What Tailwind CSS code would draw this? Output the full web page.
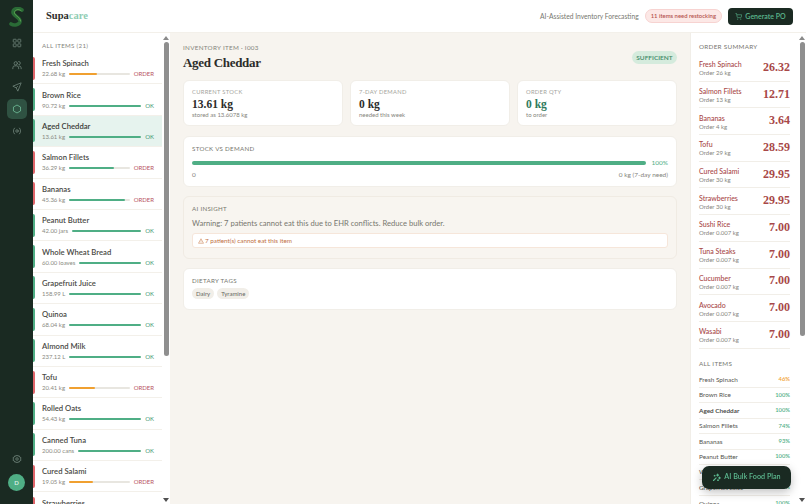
<!doctype html>
<html lang="en">

<head>
  <meta charset="UTF-8" />
  <meta name="viewport" content="width=device-width, initial-scale=1.0" />
  <title>Supacare</title>
  <script src="https://cdn.jsdelivr.net/npm/@tailwindcss/browser@4"></script>
</head>

<body class="overflow-hidden">
  <div class="flex h-[504px] w-[806px] overflow-hidden bg-white font-['Lato',sans-serif] text-[#2c2c2a]">

    <!-- icon rail -->
    <nav class="flex w-[33px] shrink-0 flex-col items-center bg-[#1a2a22] text-[#6d8278]">
      <svg class="mt-[7px] h-[20px] w-[15px]" viewBox="0 0 15 20" fill="none" stroke-linecap="round">
        <path d="M13 3C10 0.500 4.500 1 4 5c-.5 4 7.500 5 7 9.500C10.500 18 5 19 2 17" stroke="#2a6b36" stroke-width="3.600" />
        <path d="M12 3.500C9.500 2 6 2.500 5.500 5.500 5 8.500 11.500 10 11.500 14" stroke="#5ea552" stroke-width="1" />
      </svg>
      <svg class="mt-[11px] h-[10px] w-[10px]" viewBox="0 0 24 24" fill="none" stroke="currentColor" stroke-width="2">
        <rect x="3" y="3" width="7" height="7" rx="1" /><rect x="14" y="3" width="7" height="7" rx="1" />
        <rect x="3" y="14" width="7" height="7" rx="1" /><rect x="14" y="14" width="7" height="7" rx="1" />
      </svg>
      <svg class="mt-[12px] h-[10px] w-[10px]" viewBox="0 0 24 24" fill="none" stroke="currentColor" stroke-width="2" stroke-linecap="round">
        <circle cx="9" cy="8" r="4" /><path d="M2 21v-2a5 5 0 0 1 5-5h4a5 5 0 0 1 5 5v2" /><path d="M16 3.500a4 4 0 0 1 0 8M22 21v-2a5 5 0 0 0-4-4.800" />
      </svg>
      <svg class="mt-[12px] h-[10px] w-[10px]" viewBox="0 0 24 24" fill="none" stroke="currentColor" stroke-width="2" stroke-linejoin="round">
        <path d="M22 2 2 10l8 4 4 8 8-20ZM10 14l4-4" />
      </svg>
      <div class="mt-[7px] flex h-[20px] w-[20px] items-center justify-center rounded-[5px] bg-[#2f5242] text-[#6dbb96]">
        <svg class="h-[10px] w-[10px]" viewBox="0 0 24 24" fill="none" stroke="currentColor" stroke-width="2"><path d="M12 2.500 20.500 7.200v9.600L12 21.500l-8.500-4.700V7.200Z" /></svg>
      </div>
      <svg class="mt-[7px] h-[10px] w-[10px]" viewBox="0 0 24 24" fill="none" stroke="currentColor" stroke-width="2" stroke-linecap="round">
        <circle cx="12" cy="12" r="3" /><path d="M6 5a10 10 0 0 0 0 14M18 5a10 10 0 0 1 0 14" />
      </svg>
      <svg class="mt-auto h-[10px] w-[10px]" viewBox="0 0 24 24" fill="none" stroke="currentColor" stroke-width="2">
        <circle cx="12" cy="12" r="3" /><path d="M12 2.500 14 5l3.200-.6 1.100 3 3 1.100L20.700 12l.6 3.500-3 1.100-1.100 3-3.200-.6-2 2.500-2-2.500-3.200.6-1.100-3-3-1.100.6-3.500-.6-3.500 3-1.100 1.100-3L10 5Z" />
      </svg>
      <div class="mt-[10px] mb-[13px] flex h-[17px] w-[17px] items-center justify-center rounded-full bg-[#4fae85] text-[6px] font-semibold text-[#dff1e8]">D</div>
    </nav>

    <div class="flex min-w-0 flex-1 flex-col">
      <!-- top bar -->
      <header class="flex h-[33px] shrink-0 items-center border-b border-[#f3f0ea] px-[13px]">
        <div class="font-['Liberation_Serif',serif] text-[10.500px] font-bold">Supa<span class="text-[#8fcdb3]">care</span></div>
        <span class="ml-auto text-[6.700px] text-[#77776f]">AI-Assisted Inventory Forecasting</span>
        <span class="ml-[6px] rounded-full border border-[#f7d3d1] bg-[#fce8e6] px-[5px] py-[2px] text-[5.900px] leading-[8px] font-semibold text-[#b5534f]">11 items need restocking</span>
        <button class="ml-[6px] flex h-[17px] w-[65px] items-center justify-center gap-[3px] rounded-[4px] bg-[#1a2a22] text-[7px] font-semibold text-[#5cb98f]">
          <svg class="h-[7px] w-[7px]" viewBox="0 0 24 24" fill="none" stroke="currentColor" stroke-width="2"><circle cx="9" cy="21" r="1" /><circle cx="20" cy="21" r="1" /><path d="M1 1h4l2.700 13.400a2 2 0 0 0 2 1.600h9.700a2 2 0 0 0 2-1.600L23 6H6" /></svg>
          Generate PO
        </button>
      </header>

      <div class="flex min-h-0 flex-1">
        <!-- items list -->
        <aside class="flex w-[137px] shrink-0 overflow-hidden bg-white">
          <div class="w-[129px] shrink-0">
            <div class="flex h-[20px] items-end pb-[3px] pl-[9px] text-[6.200px] tracking-[0.3px] text-[#85857d]">ALL ITEMS (21)</div>

            <div class="flex h-[31.400px] items-center border-b border-[#f3f0ea]">
              <div class="h-[23px] w-[2px] rounded-r bg-[#e0656a]"></div>
              <div class="flex-1 pr-[8px] pl-[7px]">
                <div class="text-[7.700px] leading-[10px] font-semibold text-[#4a4a45]">Fresh Spinach</div>
                <div class="mt-[2px] flex items-center gap-[4px] text-[6px] leading-[8px] text-[#8a8a82]"><span>22.68 kg</span><div class="h-[2px] flex-1 rounded bg-[#e8e6e0]"><div class="h-full w-[46%] rounded bg-[#f0a030]"></div></div><span class="text-[#b8555f]">ORDER</span></div>
              </div>
            </div>
            <div class="flex h-[31.400px] items-center border-b border-[#f3f0ea]">
              <div class="h-[23px] w-[2px] rounded-r bg-[#4fae85]"></div>
              <div class="flex-1 pr-[8px] pl-[7px]">
                <div class="text-[7.700px] leading-[10px] font-semibold text-[#4a4a45]">Brown Rice</div>
                <div class="mt-[2px] flex items-center gap-[4px] text-[6px] leading-[8px] text-[#8a8a82]"><span>90.72 kg</span><div class="h-[2px] flex-1 rounded bg-[#4fae85]"></div><span class="text-[#3f9a75]">OK</span></div>
              </div>
            </div>
            <div class="flex h-[31.400px] items-center border-b border-[#f3f0ea] bg-[#e6f3ee]">
              <div class="h-[23px] w-[2px] rounded-r bg-[#4fae85]"></div>
              <div class="flex-1 pr-[8px] pl-[7px]">
                <div class="text-[7.700px] leading-[10px] font-semibold text-[#3c3c38]">Aged Cheddar</div>
                <div class="mt-[2px] flex items-center gap-[4px] text-[6px] leading-[8px] text-[#8a8a82]"><span>13.61 kg</span><div class="h-[2px] flex-1 rounded bg-[#4fae85]"></div><span class="text-[#3f9a75]">OK</span></div>
              </div>
            </div>
            <div class="flex h-[31.400px] items-center border-b border-[#f3f0ea]">
              <div class="h-[23px] w-[2px] rounded-r bg-[#e0656a]"></div>
              <div class="flex-1 pr-[8px] pl-[7px]">
                <div class="text-[7.700px] leading-[10px] font-semibold text-[#4a4a45]">Salmon Fillets</div>
                <div class="mt-[2px] flex items-center gap-[4px] text-[6px] leading-[8px] text-[#8a8a82]"><span>36.29 kg</span><div class="h-[2px] flex-1 rounded bg-[#e8e6e0]"><div class="h-full w-[74%] rounded bg-[#4fae85]"></div></div><span class="text-[#b8555f]">ORDER</span></div>
              </div>
            </div>
            <div class="flex h-[31.400px] items-center border-b border-[#f3f0ea]">
              <div class="h-[23px] w-[2px] rounded-r bg-[#e0656a]"></div>
              <div class="flex-1 pr-[8px] pl-[7px]">
                <div class="text-[7.700px] leading-[10px] font-semibold text-[#4a4a45]">Bananas</div>
                <div class="mt-[2px] flex items-center gap-[4px] text-[6px] leading-[8px] text-[#8a8a82]"><span>45.36 kg</span><div class="h-[2px] flex-1 rounded bg-[#e8e6e0]"><div class="h-full w-[93%] rounded bg-[#4fae85]"></div></div><span class="text-[#b8555f]">ORDER</span></div>
              </div>
            </div>
            <div class="flex h-[31.400px] items-center border-b border-[#f3f0ea]">
              <div class="h-[23px] w-[2px] rounded-r bg-[#4fae85]"></div>
              <div class="flex-1 pr-[8px] pl-[7px]">
                <div class="text-[7.700px] leading-[10px] font-semibold text-[#4a4a45]">Peanut Butter</div>
                <div class="mt-[2px] flex items-center gap-[4px] text-[6px] leading-[8px] text-[#8a8a82]"><span>42.00 jars</span><div class="h-[2px] flex-1 rounded bg-[#4fae85]"></div><span class="text-[#3f9a75]">OK</span></div>
              </div>
            </div>
            <div class="flex h-[31.400px] items-center border-b border-[#f3f0ea]">
              <div class="h-[23px] w-[2px] rounded-r bg-[#4fae85]"></div>
              <div class="flex-1 pr-[8px] pl-[7px]">
                <div class="text-[7.700px] leading-[10px] font-semibold text-[#4a4a45]">Whole Wheat Bread</div>
                <div class="mt-[2px] flex items-center gap-[4px] text-[6px] leading-[8px] text-[#8a8a82]"><span>60.00 loaves</span><div class="h-[2px] flex-1 rounded bg-[#4fae85]"></div><span class="text-[#3f9a75]">OK</span></div>
              </div>
            </div>
            <div class="flex h-[31.400px] items-center border-b border-[#f3f0ea]">
              <div class="h-[23px] w-[2px] rounded-r bg-[#4fae85]"></div>
              <div class="flex-1 pr-[8px] pl-[7px]">
                <div class="text-[7.700px] leading-[10px] font-semibold text-[#4a4a45]">Grapefruit Juice</div>
                <div class="mt-[2px] flex items-center gap-[4px] text-[6px] leading-[8px] text-[#8a8a82]"><span>158.99 L</span><div class="h-[2px] flex-1 rounded bg-[#4fae85]"></div><span class="text-[#3f9a75]">OK</span></div>
              </div>
            </div>
            <div class="flex h-[31.400px] items-center border-b border-[#f3f0ea]">
              <div class="h-[23px] w-[2px] rounded-r bg-[#4fae85]"></div>
              <div class="flex-1 pr-[8px] pl-[7px]">
                <div class="text-[7.700px] leading-[10px] font-semibold text-[#4a4a45]">Quinoa</div>
                <div class="mt-[2px] flex items-center gap-[4px] text-[6px] leading-[8px] text-[#8a8a82]"><span>68.04 kg</span><div class="h-[2px] flex-1 rounded bg-[#4fae85]"></div><span class="text-[#3f9a75]">OK</span></div>
              </div>
            </div>
            <div class="flex h-[31.400px] items-center border-b border-[#f3f0ea]">
              <div class="h-[23px] w-[2px] rounded-r bg-[#4fae85]"></div>
              <div class="flex-1 pr-[8px] pl-[7px]">
                <div class="text-[7.700px] leading-[10px] font-semibold text-[#4a4a45]">Almond Milk</div>
                <div class="mt-[2px] flex items-center gap-[4px] text-[6px] leading-[8px] text-[#8a8a82]"><span>237.12 L</span><div class="h-[2px] flex-1 rounded bg-[#4fae85]"></div><span class="text-[#3f9a75]">OK</span></div>
              </div>
            </div>
            <div class="flex h-[31.400px] items-center border-b border-[#f3f0ea]">
              <div class="h-[23px] w-[2px] rounded-r bg-[#e0656a]"></div>
              <div class="flex-1 pr-[8px] pl-[7px]">
                <div class="text-[7.700px] leading-[10px] font-semibold text-[#4a4a45]">Tofu</div>
                <div class="mt-[2px] flex items-center gap-[4px] text-[6px] leading-[8px] text-[#8a8a82]"><span>20.41 kg</span><div class="h-[2px] flex-1 rounded bg-[#e8e6e0]"><div class="h-full w-[43%] rounded bg-[#f0a030]"></div></div><span class="text-[#b8555f]">ORDER</span></div>
              </div>
            </div>
            <div class="flex h-[31.400px] items-center border-b border-[#f3f0ea]">
              <div class="h-[23px] w-[2px] rounded-r bg-[#4fae85]"></div>
              <div class="flex-1 pr-[8px] pl-[7px]">
                <div class="text-[7.700px] leading-[10px] font-semibold text-[#4a4a45]">Rolled Oats</div>
                <div class="mt-[2px] flex items-center gap-[4px] text-[6px] leading-[8px] text-[#8a8a82]"><span>54.43 kg</span><div class="h-[2px] flex-1 rounded bg-[#4fae85]"></div><span class="text-[#3f9a75]">OK</span></div>
              </div>
            </div>
            <div class="flex h-[31.400px] items-center border-b border-[#f3f0ea]">
              <div class="h-[23px] w-[2px] rounded-r bg-[#4fae85]"></div>
              <div class="flex-1 pr-[8px] pl-[7px]">
                <div class="text-[7.700px] leading-[10px] font-semibold text-[#4a4a45]">Canned Tuna</div>
                <div class="mt-[2px] flex items-center gap-[4px] text-[6px] leading-[8px] text-[#8a8a82]"><span>200.00 cans</span><div class="h-[2px] flex-1 rounded bg-[#4fae85]"></div><span class="text-[#3f9a75]">OK</span></div>
              </div>
            </div>
            <div class="flex h-[31.400px] items-center border-b border-[#f3f0ea]">
              <div class="h-[23px] w-[2px] rounded-r bg-[#e0656a]"></div>
              <div class="flex-1 pr-[8px] pl-[7px]">
                <div class="text-[7.700px] leading-[10px] font-semibold text-[#4a4a45]">Cured Salami</div>
                <div class="mt-[2px] flex items-center gap-[4px] text-[6px] leading-[8px] text-[#8a8a82]"><span>19.05 kg</span><div class="h-[2px] flex-1 rounded bg-[#e8e6e0]"><div class="h-full w-[39%] rounded bg-[#f0a030]"></div></div><span class="text-[#b8555f]">ORDER</span></div>
              </div>
            </div>
            <div class="flex h-[31.400px] items-center">
              <div class="h-[23px] w-[2px] rounded-r bg-[#e0656a]"></div>
              <div class="flex-1 pr-[8px] pl-[7px]">
                <div class="text-[7.700px] leading-[10px] font-semibold text-[#4a4a45]">Strawberries</div>
                <div class="mt-[2px] h-[8px]"></div>
              </div>
            </div>
          </div>
          <!-- scrollbar -->
          <div class="flex w-[8px] shrink-0 flex-col items-center bg-white pt-[3px] pb-[2px]">
            <div class="h-0 w-0 border-x-[3px] border-b-[4px] border-x-transparent border-b-[#8a8a8a]"></div>
            <div class="mt-[2px] h-[314px] w-[5px] rounded-full bg-[#8f8f8f]"></div>
            <div class="mt-auto h-0 w-0 border-x-[3px] border-t-[4px] border-x-transparent border-t-[#505050]"></div>
          </div>
        </aside>

        <!-- detail -->
        <main class="min-w-0 flex-1 bg-[#f7f4ef] px-[13px] pt-[12px]">
          <div class="flex justify-between">
            <div>
              <div class="text-[6.300px] leading-[6px] tracking-[0.3px] text-[#85857d]">INVENTORY ITEM · I003</div>
              <h1 class="mt-[3px] font-['Liberation_Serif',serif] text-[13px] leading-[18px] font-bold tracking-[-0.3px] text-[#2c2c2a]">Aged Cheddar</h1>
            </div>
            <span class="mt-[6px] flex h-[13px] w-[45px] items-center justify-center rounded-full bg-[#d5ebdd] text-[6.500px] font-semibold text-[#3f8a68]">SUFFICIENT</span>
          </div>

          <div class="mt-[8px] grid grid-cols-3 gap-[7px]">
            <div class="h-[46px] rounded-[6px] border border-[#f1eee8] bg-white pt-[6.500px] pl-[8px]">
              <div class="text-[5.800px] leading-[7px] tracking-[0.3px] text-[#a5a59d]">CURRENT STOCK</div>
              <div class="mt-[2px] font-['Liberation_Serif',serif] text-[11.500px] leading-[14px] font-bold text-[#2c2c2a]">13.61 kg</div>
              <div class="text-[6px] leading-[8px] text-[#85857d]">stored as 13.6078 kg</div>
            </div>
            <div class="h-[46px] rounded-[6px] border border-[#f1eee8] bg-white pt-[6.500px] pl-[8px]">
              <div class="text-[5.800px] leading-[7px] tracking-[0.3px] text-[#a5a59d]">7-DAY DEMAND</div>
              <div class="mt-[2px] font-['Liberation_Serif',serif] text-[11.500px] leading-[14px] font-bold text-[#2c2c2a]">0 kg</div>
              <div class="text-[6px] leading-[8px] text-[#85857d]">needed this week</div>
            </div>
            <div class="h-[46px] rounded-[6px] border border-[#f1eee8] bg-white pt-[6.500px] pl-[8px]">
              <div class="text-[5.800px] leading-[7px] tracking-[0.3px] text-[#a5a59d]">ORDER QTY</div>
              <div class="mt-[2px] font-['Liberation_Serif',serif] text-[11.500px] leading-[14px] font-bold text-[#2f7a5c]">0 kg</div>
              <div class="text-[6px] leading-[8px] text-[#85857d]">to order</div>
            </div>
          </div>

          <section class="mt-[10px] h-[51px] rounded-[6px] border border-[#f1eee8] bg-white px-[8px] pt-[8px]">
            <div class="text-[6.200px] leading-[7px] tracking-[0.3px] text-[#77776f]">STOCK VS DEMAND</div>
            <div class="mt-[7px] flex items-center gap-[5px]">
              <div class="h-[4px] flex-1 rounded-full bg-[#4fae85]"></div>
              <span class="text-[6.500px] leading-[7px] text-[#4fae85]">100%</span>
            </div>
            <div class="mt-[4.500px] flex justify-between text-[6.500px] leading-[8px] text-[#85857d]"><span>0</span><span>0 kg (7-day need)</span></div>
          </section>

          <section class="mt-[9px] h-[63px] rounded-[6px] border border-[#f0ebe3] bg-[#f8f5f0] px-[8px] pt-[8px]">
            <div class="text-[6.200px] leading-[7px] tracking-[0.3px] text-[#77776f]">AI INSIGHT</div>
            <p class="mt-[6px] text-[7.600px] leading-[10px] text-[#77776f]">Warning: 7 patients cannot eat this due to EHR conflicts. Reduce bulk order.</p>
            <div class="mt-[5px] flex h-[15px] items-center gap-[1px] rounded-[3px] border border-[#f6e6da] bg-white px-[5px] text-[6.300px] text-[#c0703f]">
              <svg class="h-[6px] w-[6px]" viewBox="0 0 24 24" fill="none" stroke="currentColor" stroke-width="2" stroke-linejoin="round"><path d="M12 3 2 21h20ZM12 10v5M12 17v1" /></svg>
              7 patient(s) cannot eat this item
            </div>
          </section>

          <section class="mt-[9px] h-[42px] rounded-[6px] border border-[#f1eee8] bg-white px-[8px] pt-[8px]">
            <div class="text-[6.200px] leading-[7px] tracking-[0.3px] text-[#77776f]">DIETARY TAGS</div>
            <div class="mt-[4px] flex gap-[3px] text-[6px] text-[#66665f]">
              <span class="flex h-[11px] items-center rounded-full bg-[#f1eee8] px-[4px]">Dairy</span>
              <span class="flex h-[11px] items-center rounded-full bg-[#f1eee8] px-[4px]">Tyramine</span>
            </div>
          </section>
        </main>

        <!-- order summary -->
        <aside class="flex w-[116px] shrink-0 overflow-hidden border-l border-[#f1eee8] bg-white">
          <div class="w-[107px] shrink-0 pt-[10px] pl-[8px]">
            <div class="mb-[5px] text-[6.300px] leading-[7px] tracking-[0.3px] text-[#77776f]">ORDER SUMMARY</div>
            <div class="flex h-[26.700px] w-[91px] items-center justify-between border-b border-[#f1eee8]"><div class="mt-[1px]"><div class="text-[7px] leading-[10px] font-medium text-[#a84848]">Fresh Spinach</div><div class="text-[6px] leading-[8px] text-[#85857d]">Order 26 kg</div></div><span class="mb-[2px] font-['Liberation_Serif',serif] text-[12px] font-bold text-[#a84848]">26.32</span></div>
            <div class="flex h-[26.700px] w-[91px] items-center justify-between border-b border-[#f1eee8]"><div class="mt-[1px]"><div class="text-[7px] leading-[10px] font-medium text-[#a84848]">Salmon Fillets</div><div class="text-[6px] leading-[8px] text-[#85857d]">Order 13 kg</div></div><span class="mb-[2px] font-['Liberation_Serif',serif] text-[12px] font-bold text-[#a84848]">12.71</span></div>
            <div class="flex h-[26.700px] w-[91px] items-center justify-between border-b border-[#f1eee8]"><div class="mt-[1px]"><div class="text-[7px] leading-[10px] font-medium text-[#a84848]">Bananas</div><div class="text-[6px] leading-[8px] text-[#85857d]">Order 4 kg</div></div><span class="mb-[2px] font-['Liberation_Serif',serif] text-[12px] font-bold text-[#a84848]">3.64</span></div>
            <div class="flex h-[26.700px] w-[91px] items-center justify-between border-b border-[#f1eee8]"><div class="mt-[1px]"><div class="text-[7px] leading-[10px] font-medium text-[#a84848]">Tofu</div><div class="text-[6px] leading-[8px] text-[#85857d]">Order 29 kg</div></div><span class="mb-[2px] font-['Liberation_Serif',serif] text-[12px] font-bold text-[#a84848]">28.59</span></div>
            <div class="flex h-[26.700px] w-[91px] items-center justify-between border-b border-[#f1eee8]"><div class="mt-[1px]"><div class="text-[7px] leading-[10px] font-medium text-[#a84848]">Cured Salami</div><div class="text-[6px] leading-[8px] text-[#85857d]">Order 30 kg</div></div><span class="mb-[2px] font-['Liberation_Serif',serif] text-[12px] font-bold text-[#a84848]">29.95</span></div>
            <div class="flex h-[26.700px] w-[91px] items-center justify-between border-b border-[#f1eee8]"><div class="mt-[1px]"><div class="text-[7px] leading-[10px] font-medium text-[#a84848]">Strawberries</div><div class="text-[6px] leading-[8px] text-[#85857d]">Order 30 kg</div></div><span class="mb-[2px] font-['Liberation_Serif',serif] text-[12px] font-bold text-[#a84848]">29.95</span></div>
            <div class="flex h-[26.700px] w-[91px] items-center justify-between border-b border-[#f1eee8]"><div class="mt-[1px]"><div class="text-[7px] leading-[10px] font-medium text-[#a84848]">Sushi Rice</div><div class="text-[6px] leading-[8px] text-[#85857d]">Order 0.007 kg</div></div><span class="mb-[2px] font-['Liberation_Serif',serif] text-[12px] font-bold text-[#a84848]">7.00</span></div>
            <div class="flex h-[26.700px] w-[91px] items-center justify-between border-b border-[#f1eee8]"><div class="mt-[1px]"><div class="text-[7px] leading-[10px] font-medium text-[#a84848]">Tuna Steaks</div><div class="text-[6px] leading-[8px] text-[#85857d]">Order 0.007 kg</div></div><span class="mb-[2px] font-['Liberation_Serif',serif] text-[12px] font-bold text-[#a84848]">7.00</span></div>
            <div class="flex h-[26.700px] w-[91px] items-center justify-between border-b border-[#f1eee8]"><div class="mt-[1px]"><div class="text-[7px] leading-[10px] font-medium text-[#a84848]">Cucumber</div><div class="text-[6px] leading-[8px] text-[#85857d]">Order 0.007 kg</div></div><span class="mb-[2px] font-['Liberation_Serif',serif] text-[12px] font-bold text-[#a84848]">7.00</span></div>
            <div class="flex h-[26.700px] w-[91px] items-center justify-between border-b border-[#f1eee8]"><div class="mt-[1px]"><div class="text-[7px] leading-[10px] font-medium text-[#a84848]">Avocado</div><div class="text-[6px] leading-[8px] text-[#85857d]">Order 0.007 kg</div></div><span class="mb-[2px] font-['Liberation_Serif',serif] text-[12px] font-bold text-[#a84848]">7.00</span></div>
            <div class="flex h-[26.700px] w-[91px] items-center justify-between border-b border-[#f1eee8]"><div class="mt-[1px]"><div class="text-[7px] leading-[10px] font-medium text-[#a84848]">Wasabi</div><div class="text-[6px] leading-[8px] text-[#85857d]">Order 0.007 kg</div></div><span class="mb-[2px] font-['Liberation_Serif',serif] text-[12px] font-bold text-[#a84848]">7.00</span></div>

            <div class="mt-[11px] mb-[6px] text-[6.300px] leading-[7px] tracking-[0.3px] text-[#77776f]">ALL ITEMS</div>
            <div class="flex h-[15.400px] w-[91px] items-center justify-between border-b border-[#f1eee8] text-[6.400px] text-[#55554f]"><span>Fresh Spinach</span><span class="text-[5.800px] font-semibold text-[#f0a030]">46%</span></div>
            <div class="flex h-[15.400px] w-[91px] items-center justify-between border-b border-[#f1eee8] text-[6.400px] text-[#55554f]"><span>Brown Rice</span><span class="text-[5.800px] font-semibold text-[#4fae85]">100%</span></div>
            <div class="flex h-[15.400px] w-[91px] items-center justify-between border-b border-[#f1eee8] text-[6.400px] font-semibold text-[#3c3c38]"><span>Aged Cheddar</span><span class="text-[5.800px] font-semibold text-[#4fae85]">100%</span></div>
            <div class="flex h-[15.400px] w-[91px] items-center justify-between border-b border-[#f1eee8] text-[6.400px] text-[#55554f]"><span>Salmon Fillets</span><span class="text-[5.800px] font-semibold text-[#4fae85]">74%</span></div>
            <div class="flex h-[15.400px] w-[91px] items-center justify-between border-b border-[#f1eee8] text-[6.400px] text-[#55554f]"><span>Bananas</span><span class="text-[5.800px] font-semibold text-[#4fae85]">93%</span></div>
            <div class="flex h-[15.400px] w-[91px] items-center justify-between border-b border-[#f1eee8] text-[6.400px] text-[#55554f]"><span>Peanut Butter</span><span class="text-[5.800px] font-semibold text-[#4fae85]">100%</span></div>
            <div class="flex h-[15.400px] w-[91px] items-center justify-between border-b border-[#f1eee8] text-[6.400px] text-[#55554f]"><span>Whole Wheat Bread</span><span class="text-[5.800px] font-semibold text-[#4fae85]">100%</span></div>
            <div class="flex h-[15.400px] w-[91px] items-center justify-between border-b border-[#f1eee8] text-[6.400px] text-[#55554f]"><span>Grapefruit Juice</span><span class="text-[5.800px] font-semibold text-[#4fae85]">100%</span></div>
            <div class="flex h-[15.400px] w-[91px] items-center justify-between text-[6.400px] text-[#55554f]"><span>Quinoa</span><span class="text-[5.800px] font-semibold text-[#4fae85]">100%</span></div>
          </div>
          <div class="flex w-[8px] shrink-0 flex-col items-center pt-[3px] pb-[2px]">
            <div class="h-0 w-0 border-x-[3px] border-b-[4px] border-x-transparent border-b-[#8a8a8a]"></div>
            <div class="mt-[2px] h-[294px] w-[5px] rounded-full bg-[#8f8f8f]"></div>
            <div class="mt-auto h-0 w-0 border-x-[3px] border-t-[4px] border-x-transparent border-t-[#505050]"></div>
          </div>
        </aside>
      </div>
    </div>

    <!-- floating button -->
    <button class="fixed top-[466px] left-[702px] flex h-[23px] w-[89px] items-center justify-center gap-[3px] rounded-[7px] bg-[#1a2a22] text-[7.200px] font-semibold text-[#5cb98f] shadow-[0_3px_10px_rgba(0,0,0,0.25)]">
      <svg class="h-[9px] w-[9px]" viewBox="0 0 24 24" fill="none" stroke="currentColor" stroke-width="3" stroke-linecap="round">
        <path d="M4 20 11 13M15 3v5M12.500 5.500h5M20 11v4M18 13h4M7 6v2M6 7h2" /><circle cx="16" cy="19" r="1" />
      </svg>
      AI Bulk Food Plan
    </button>
  </div>
</body>

</html>
